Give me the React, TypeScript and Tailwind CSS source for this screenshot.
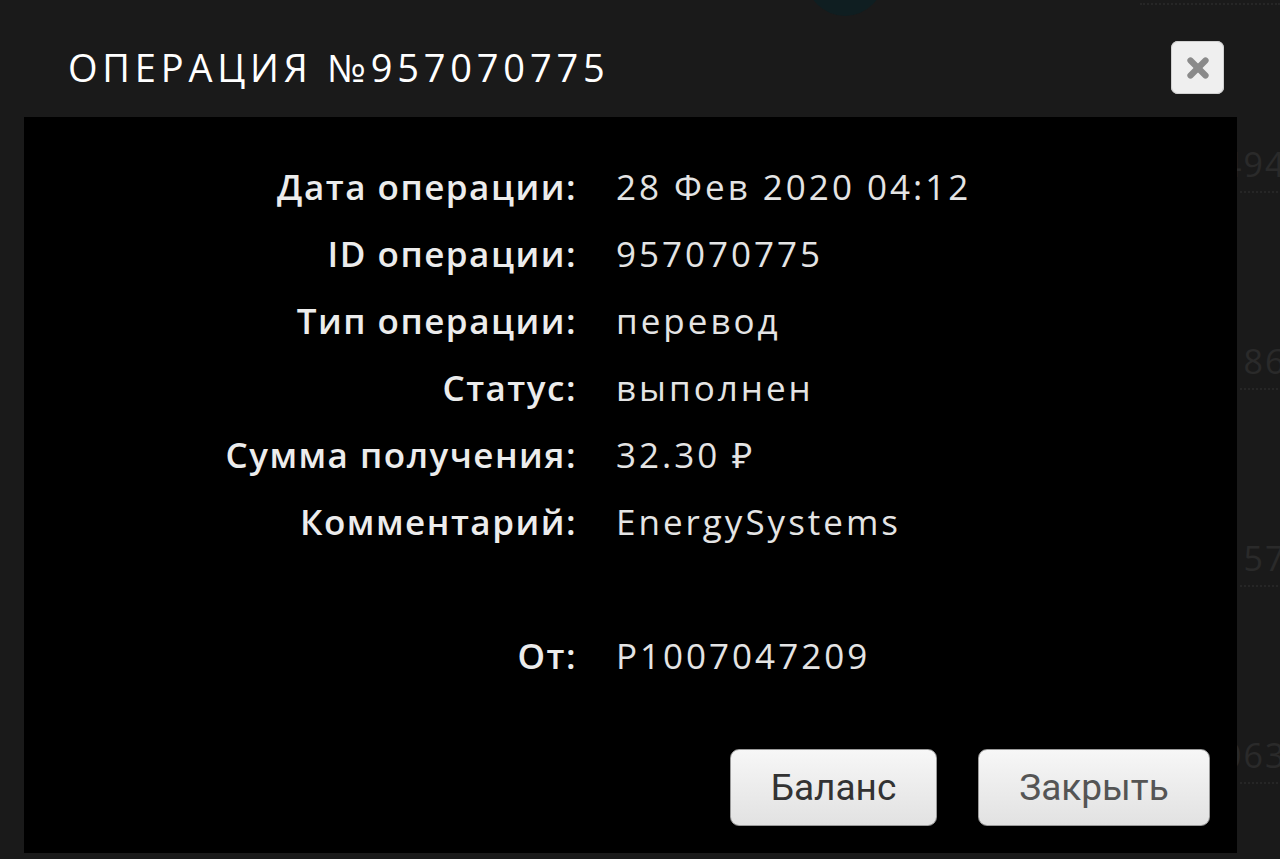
import { X } from 'lucide-react'

const rows: { label: string; value: string }[] = [
  { label: 'Дата операции:', value: '28 Фев 2020 04:12' },
  { label: 'ID операции:', value: '957070775' },
  { label: 'Тип операции:', value: 'перевод' },
  { label: 'Статус:', value: 'выполнен' },
  { label: 'Сумма получения:', value: '32.30 ₽' },
  { label: 'Комментарий:', value: 'EnergySystems' },
]

const behind = ['494', '186', '157', '063']

function Backdrop() {
  return (
    <div className="absolute inset-0 overflow-hidden">
      <div className="absolute left-[806px] top-[-62px] size-[78px] rounded-full bg-[#0f1e21]" />
      <div className="absolute left-[1140px] top-[3px] w-[140px] border-t-2 border-dotted border-[#262626]" />
      <div className="absolute left-[1222px] top-[146px] flex flex-col gap-[150px]">
        {behind.map((n) => (
          <div key={n} className="w-[140px]">
            <p className="text-[34px] leading-[37px] tracking-[2px] text-[#2a2a2a]">{n}</p>
            <div className="mt-2 ml-[18px] border-t-2 border-dotted border-[#262626]" />
          </div>
        ))}
      </div>
    </div>
  )
}

function Btn({ children, dim }: { children: React.ReactNode; dim?: boolean }) {
  return (
    <button
      className={
        'flex h-[77px] w-full items-center justify-center rounded-[9px] border border-[#9a9a9a] bg-gradient-to-b from-[#f7f7f7] via-[#ececec] to-[#e2e2e2] font-["Roboto",sans-serif] text-[37px] ' +
        (dim ? 'text-[#555]' : 'text-[#333]')
      }
    >
      {children}
    </button>
  )
}

export default function App() {
  return (
    <div className="relative h-[859px] w-[1280px] overflow-hidden bg-[#1a1a1a] font-['Open_Sans',sans-serif]">
      <Backdrop />
      <div className="relative flex h-[117px] items-center justify-between pl-[68px] pr-[56px]">
        <h1 className="pt-[18px] text-[38px] font-normal uppercase tracking-[4.8px] text-white">
          Операция №957070775
        </h1>
        <button className="mt-[18px] flex size-[53px] items-center justify-center rounded-[7px] bg-[#efefef] shadow-[0_0_0_1px_#d0d0d0_inset]">
          <X className="size-[30px] text-[#8a8a8a]" strokeWidth={5} />
        </button>
      </div>
      <div className="relative ml-[24px] flex h-[736px] w-[1213px] flex-col bg-black">
        <div className="grid grid-cols-[553px_1fr] gap-x-[39px] pt-[36px]">
          {rows.map((r) => (
            <div key={r.label} className="contents">
              <span className="h-[67px] text-right text-[35px] font-semibold leading-[67px] tracking-[1.5px] text-[#ececec]">
                {r.label}
              </span>
              <span className="h-[67px] text-[35px] leading-[67px] tracking-[3px] text-[#e4e4e4]">
                {r.value}
              </span>
            </div>
          ))}
          <span className="h-[67px]" />
          <span className="h-[67px]" />
          <span className="h-[67px] text-right text-[35px] font-semibold leading-[67px] tracking-[1.5px] text-[#ececec]">
            От:
          </span>
          <span className="h-[67px] text-[35px] leading-[67px] tracking-[3px] text-[#e4e4e4]">
            P1007047209
          </span>
        </div>
        <div className="mt-auto mb-[27px] flex justify-end gap-[41px] pr-[27px]">
          <div className="w-[207px]">
            <Btn>Баланс</Btn>
          </div>
          <div className="w-[232px]">
            <Btn dim>Закрыть</Btn>
          </div>
        </div>
      </div>
    </div>
  )
}
